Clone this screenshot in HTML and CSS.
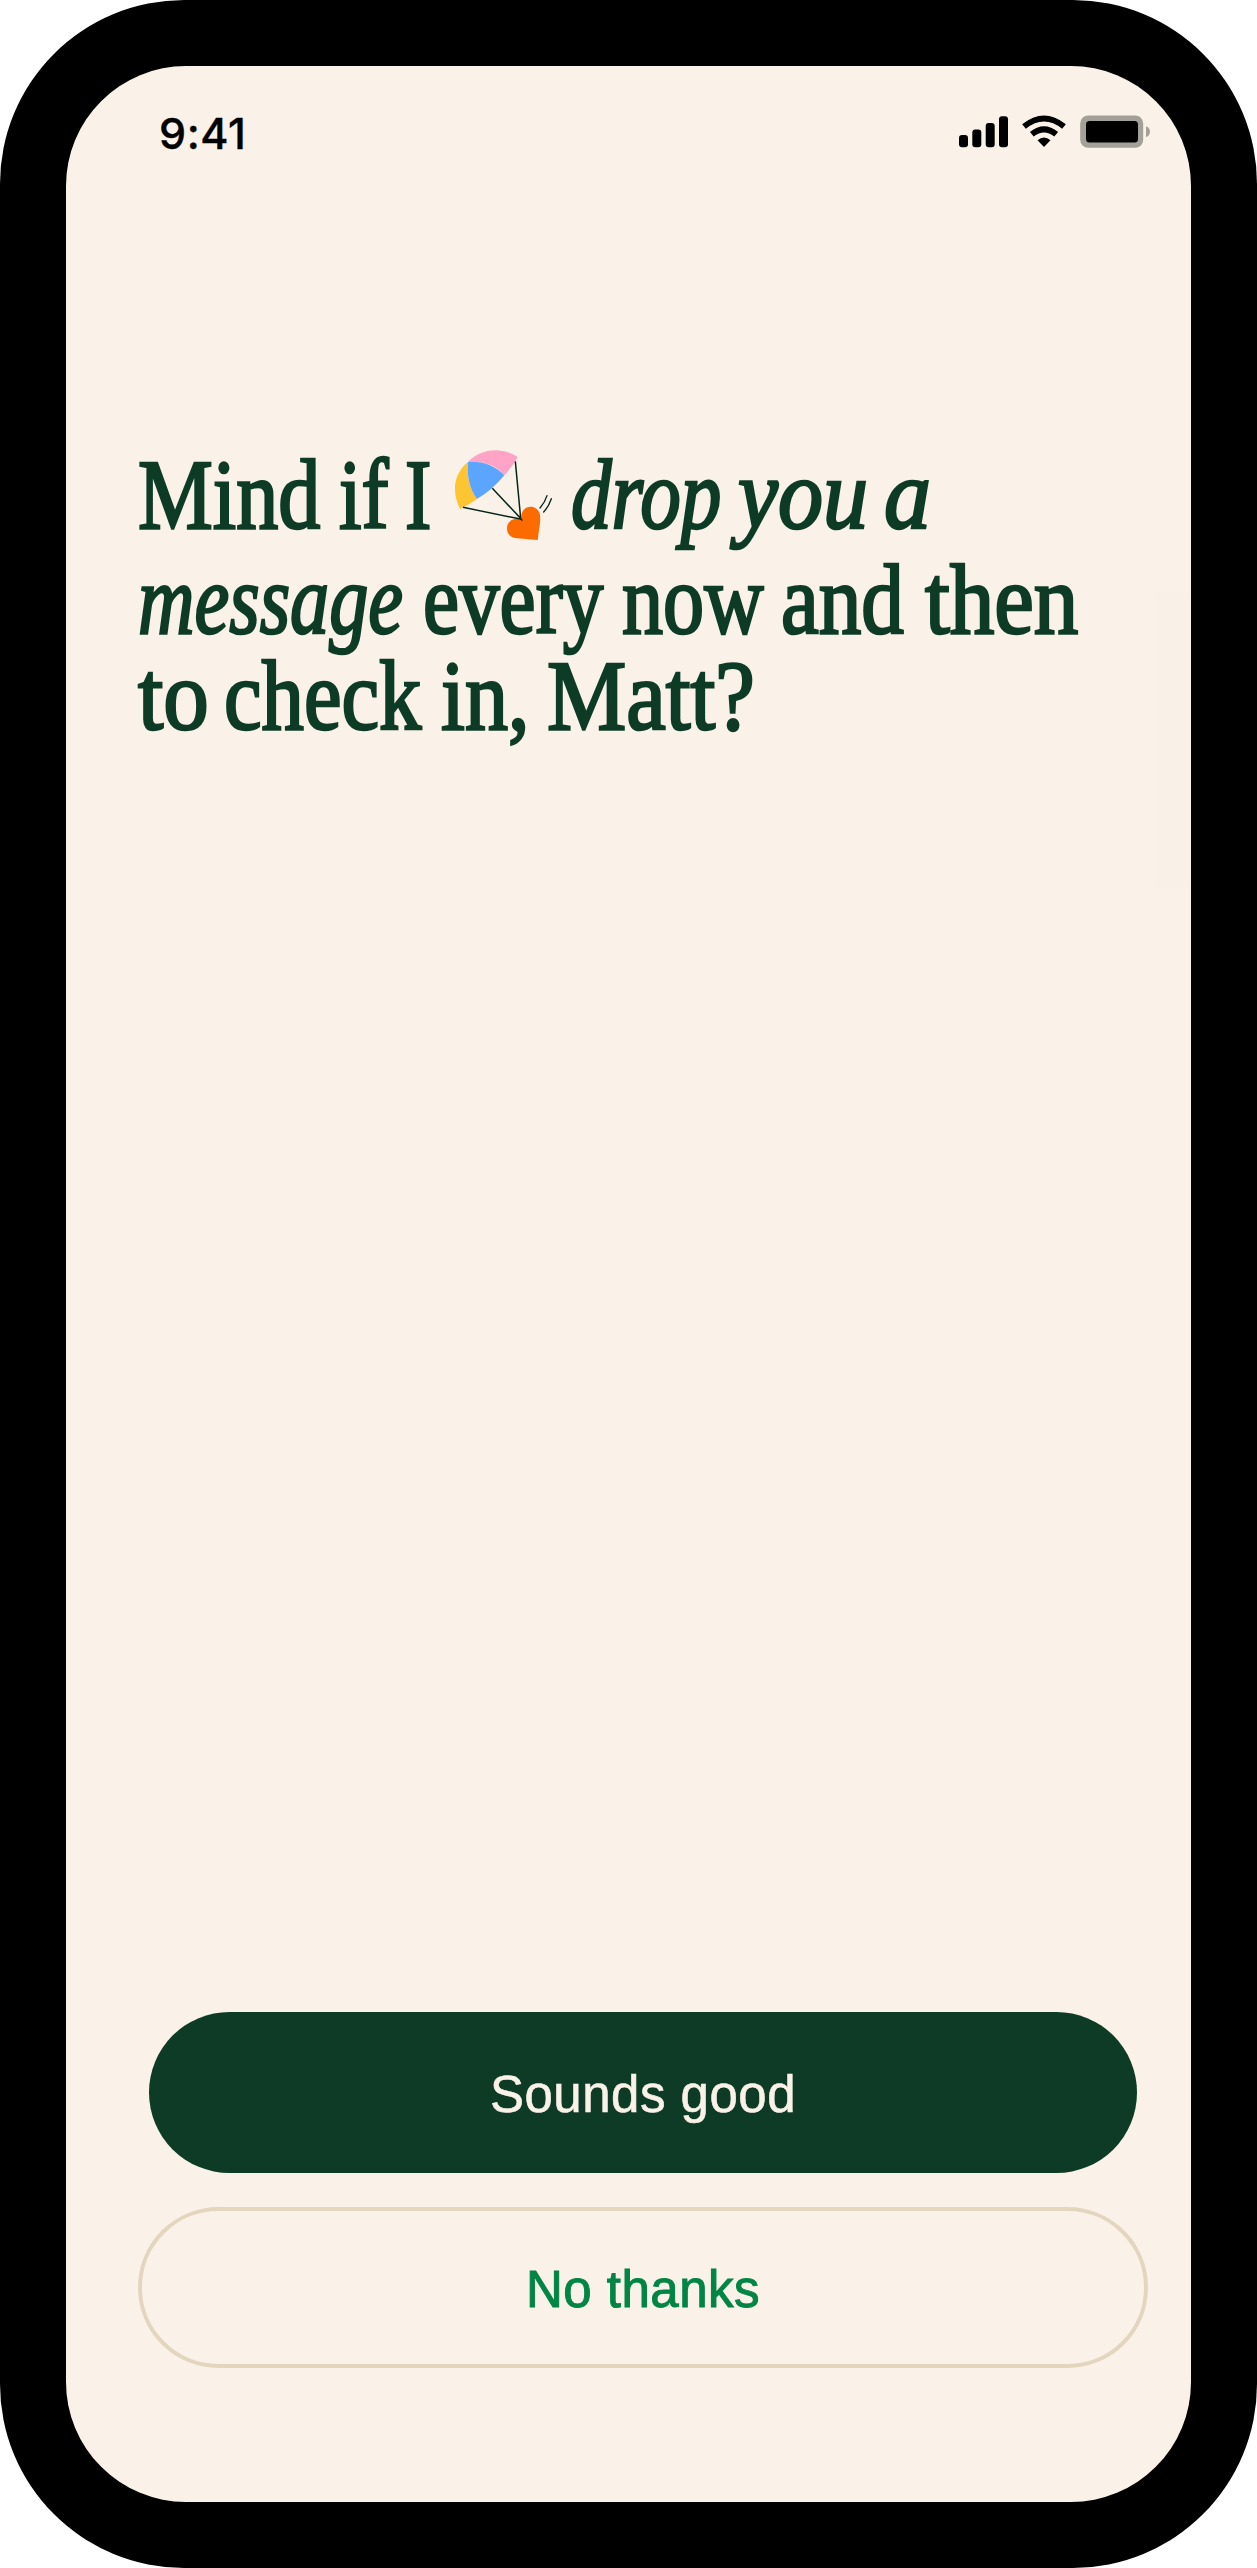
FILE: index.html
```html
<!DOCTYPE html>
<html lang="en">
<head>
    <meta charset="UTF-8">
    <title>Check in</title>
    <link rel="stylesheet" href="styles.css">
</head>
<body>
    <div class="phone">
        <main class="screen">
            <!-- status bar -->
            <header class="status-bar">
                <span class="time">9:41</span>
                <svg class="status-icons" viewBox="0 0 192 34" aria-hidden="true">
                    <rect x="0" y="20" width="9" height="12.3" rx="3"/>
                    <rect x="13.3" y="14.6" width="9" height="17.7" rx="3"/>
                    <rect x="26.7" y="8" width="9" height="24.3" rx="3"/>
                    <rect x="40" y="1.3" width="9" height="31" rx="3"/>
                    <g fill="none" stroke="#000" stroke-width="6">
                        <path d="M65 11.5 Q85-4.5 105 11.5"/>
                        <path d="M72.8 19.3 Q85 9.3 97.2 19.3"/>
                    </g>
                    <path d="M78.5 25.3 Q85 19.5 91.5 25.3 L85 32Z"/>
                    <rect x="121.2" y=".4" width="63" height="32.4" rx="8" fill="#a3a098"/>
                    <rect x="127" y="6" width="52" height="21.4" rx="3.5"/>
                    <path d="M187 11.3 Q191 13.2 191 16.8 T187 22.3Z" fill="#a3a098"/>
                </svg>
            </header>

            <h1 class="title">
                <span class="line line-first">
                    <span class="word w-mind">Mind</span>
                    <span class="word w-if">if</span>
                    <span class="word w-i">I</span>
                    <svg class="parachute" viewBox="70 55 300 280" aria-hidden="true">
                        <path d="M115 96 C145 62 210 45 264 81 Q251 106 224 136 C205 110 165 92 115 96Z" fill="#ffa4c6"/>
                        <path d="M115 96 C77 126 62 178 91 237 Q117 225 142 207 C122 180 111 145 115 96Z" fill="#ffc432"/>
                        <path d="M115 96 C155 93 196 105 224 136 Q187 181 142 207 C122 180 111 145 115 96Z" fill="#5ba5ff"/>
                        <path d="M275 267 C273 230 302 226 317 234 C333 243 333 263 331 278 L324 330 L262 325 C238 323 231 307 232 292 C234 274 252 261 275 267Z" fill="#fb6b00"/>
                        <path d="M257 94 L273 265 L188 175 M100 232 L276 268 M273 265 L278 272" class="cord"/>
                        <path d="M352 197 Q346 217 331 234 M365 206 Q357 230 342 246" class="cord cord-thin"/>
                    </svg>
                    <em class="word w-drop">drop</em>
                    <em class="word w-you">you</em>
                    <em class="word w-a">a</em>
                </span>
                <span class="line">
                    <em class="word w-message">message</em>
                    <span class="word w-every">every</span>
                    <span class="word w-now">now</span>
                    <span class="word w-and">and</span>
                    <span class="word w-then">then</span>
                </span>
                <span class="line">
                    <span class="word w-to">to</span>
                    <span class="word w-check">check</span>
                    <span class="word w-in">in,</span>
                    <span class="word w-matt">Matt?</span>
                </span>
            </h1>

            <div class="actions">
                <button type="button" class="btn btn-primary">Sounds good</button>
                <button type="button" class="btn btn-outline">No thanks</button>
            </div>
        </main>
    </div>
</body>
</html>
```

FILE: styles.css
```css
* {
    box-sizing: border-box;
}
body {
    margin: 0;
    background: #fff;
}
.phone {
    width: 1257px;
    height: 2568px;
    padding: 66px;
    background: #000;
    border-radius: 184px;
}
.screen {
    position: relative;
    display: flex;
    flex-direction: column;
    height: 100%;
    padding: 0 43px 134px 72px;
    background: #faf2e8;
    border-radius: 120px;
    overflow: hidden;
}
/* faint strip on the right edge */
.screen::after {
    content: "";
    position: absolute;
    top: 527px;
    right: 0;
    width: 36px;
    height: 294px;
    background: #f9f0e7;
}

/* status bar */
.status-bar {
    display: flex;
    justify-content: space-between;
    align-items: flex-start;
    height: 381px;
    padding: 42px 0 0 21px;
}
.time {
    font-family: Inter, sans-serif;
    font-size: 43px;
    font-weight: 500;
    line-height: 50px;
    letter-spacing: .6px;
    -webkit-text-stroke: .4px #000;
}
.status-icons {
    width: 192px;
    height: 34px;
    margin: 7px -3px 0 0;
}

/* heading */
.title {
    margin: 0;
    color: #0d3b26;
    font-family: "Liberation Serif", serif;
    font-size: 99px;
    font-weight: 400;
    line-height: 96px;
    -webkit-text-stroke: 2.6px #0d3b26;
}
.line {
    display: flex;
    height: 96px;
}
.line-first {
    margin-bottom: 9px;
}
/* each word is narrowed, its width is the advance to the next word */
.word {
    flex: none;
    white-space: nowrap;
    transform: scaleX(var(--s));
    transform-origin: 0 0;
}
.w-mind { width: 201px; --s: .85; }
.w-if { width: 66px; --s: .82; }
.w-i { width: 48px; --s: .8; }
.w-drop { width: 167px; --s: .82; }
.w-you { width: 146px; --s: .91; }
.w-a { width: 50px; --s: .95; }
.w-message { width: 285px; --s: .79; }
.w-every { width: 199px; --s: .82; }
.w-now { width: 159px; --s: .83; }
.w-and { width: 144px; --s: .86; }
.w-then { width: 154px; --s: .9; }
.w-to { width: 86px; --s: .92; }
.w-check { width: 217px; --s: .855; }
.w-in { width: 106px; --s: .87; }
.w-matt { width: 207px; --s: .9; }

.parachute {
    flex: none;
    width: 100px;
    height: 94px;
    margin: 1px 18px 0 0;
}
.cord {
    fill: none;
    stroke: #06251a;
    stroke-width: 4.5;
}
.cord-thin {
    stroke-width: 4;
    stroke-linecap: round;
}

/* buttons */
.actions {
    display: flex;
    flex-direction: column;
    gap: 34.5px;
    margin-top: auto;
}
.btn {
    padding: 5px 0 0;
    border: 0;
    border-radius: 81px;
    font-family: "Liberation Sans", Arial, sans-serif;
    font-size: 51px;
    line-height: 60px;
    letter-spacing: .5px;
}
.btn-primary {
    height: 160.5px;
    margin: 0 11px;
    background: #0d3b26;
    color: #faf2e8;
    -webkit-text-stroke: .6px #faf2e8;
}
.btn-outline {
    height: 161px;
    border: 4px solid #e4d5bf;
    background: transparent;
    color: #008545;
    -webkit-text-stroke: 1px #008545;
}
```
